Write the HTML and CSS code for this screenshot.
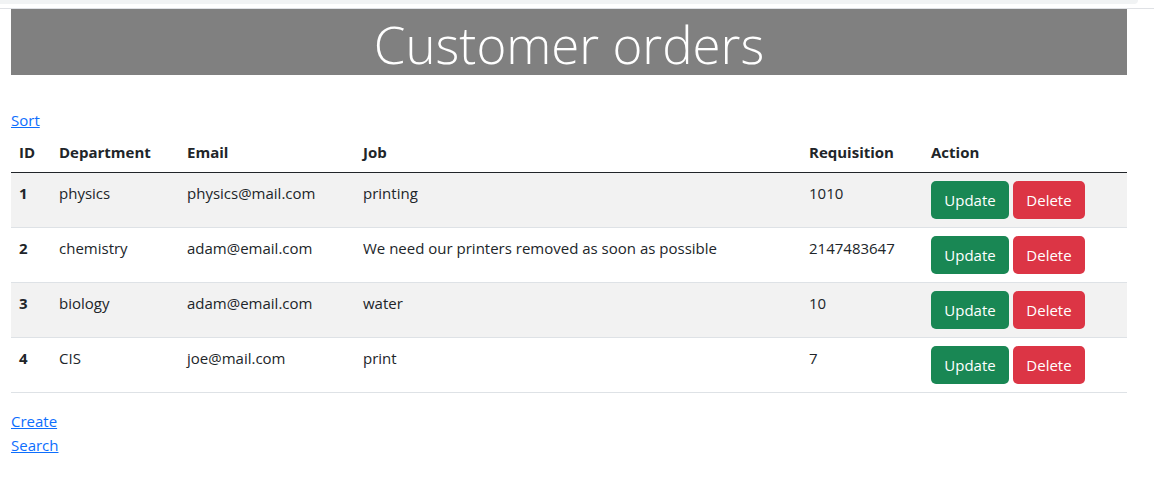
FILE: index.html
```html
<!DOCTYPE html>
<html lang="en">
<head>
<meta charset="utf-8">
<title>Customer orders</title>
<link rel="stylesheet" href="styles.css">
</head>
<body>
<div class="chrome"><div class="chrome-band"></div></div>
<main class="page">
  <h1 class="banner">Customer orders</h1>
  <a class="link sort" href="#">Sort</a>
  <table class="orders">
    <colgroup>
      <col class="c-id"><col class="c-dep"><col class="c-email"><col class="c-job"><col class="c-req"><col class="c-act">
    </colgroup>
    <thead>
      <tr><th>ID</th><th>Department</th><th>Email</th><th>Job</th><th>Requisition</th><th>Action</th></tr>
    </thead>
    <tbody>
      <tr class="striped">
        <th>1</th><td>physics</td><td>physics@mail.com</td><td>printing</td><td>1010</td>
        <td><div class="actions"><a class="btn btn-update" href="#">Update</a><a class="btn btn-delete" href="#">Delete</a></div></td>
      </tr>
      <tr>
        <th>2</th><td>chemistry</td><td>adam@email.com</td><td>We need our printers removed as soon as possible</td><td>2147483647</td>
        <td><div class="actions"><a class="btn btn-update" href="#">Update</a><a class="btn btn-delete" href="#">Delete</a></div></td>
      </tr>
      <tr class="striped">
        <th>3</th><td>biology</td><td>adam@email.com</td><td>water</td><td>10</td>
        <td><div class="actions"><a class="btn btn-update" href="#">Update</a><a class="btn btn-delete" href="#">Delete</a></div></td>
      </tr>
      <tr>
        <th>4</th><td>CIS</td><td>joe@mail.com</td><td>print</td><td>7</td>
        <td><div class="actions"><a class="btn btn-update" href="#">Update</a><a class="btn btn-delete" href="#">Delete</a></div></td>
      </tr>
    </tbody>
  </table>
  <div class="footer-links">
    <a class="link" href="#">Create</a>
    <a class="link" href="#">Search</a>
  </div>
</main>
</body>
</html>
```

FILE: styles.css
```css
* { box-sizing: border-box; }

html, body {
  margin: 0;
  padding: 0;
  background: #fff;
}

body {
  font-family: "Open Sans", "Noto Sans", "Liberation Sans", sans-serif;
  font-size: 15px;
  line-height: 24px;
  color: #212529;
}

.chrome {
  height: 9px;
  border-bottom: 1px solid #dfe1e5;
}

.chrome-band {
  width: 1138px;
  height: 4px;
  background: #f1f3f4;
  border-bottom-right-radius: 6px;
}

.page {
  width: 1116px;
  margin-left: 11px;
}

.banner {
  margin: 0 0 33px 0;
  height: 66px;
  padding-top: 4px;
  background: #808080;
  color: #fff;
  text-align: center;
  font-family: "Open Sans", "Noto Sans", sans-serif;
  font-weight: 300;
  font-size: 51px;
  line-height: 62px;
}

.link {
  color: #0d6efd;
  text-decoration: underline;
  display: block;
  width: max-content;
}

.orders {
  width: 1116px;
  border-collapse: collapse;
  table-layout: fixed;
  margin-bottom: 16px;
}

.c-id { width: 40px; }
.c-dep { width: 128px; }
.c-email { width: 176px; }
.c-job { width: 446px; }
.c-req { width: 122px; }
.c-act { width: 204px; }

.orders th,
.orders td {
  padding: 8px;
  text-align: left;
  vertical-align: top;
  border-bottom: 1px solid #dee2e6;
  white-space: nowrap;
}

.orders thead th {
  font-weight: 700;
  border-bottom: 1px solid #212529;
}

.orders tbody th {
  font-weight: 700;
}

.orders tr.striped th,
.orders tr.striped td {
  background: #f2f2f2;
}

.actions {
  display: flex;
  gap: 4px;
}

.btn {
  display: block;
  height: 38px;
  line-height: 38px;
  text-align: center;
  color: #fff;
  text-decoration: none;
  border-radius: 5px;
  font-size: 15px;
}

.btn-update {
  width: 78px;
  background: #198754;
}

.btn-delete {
  width: 72px;
  background: #dc3545;
}
```
